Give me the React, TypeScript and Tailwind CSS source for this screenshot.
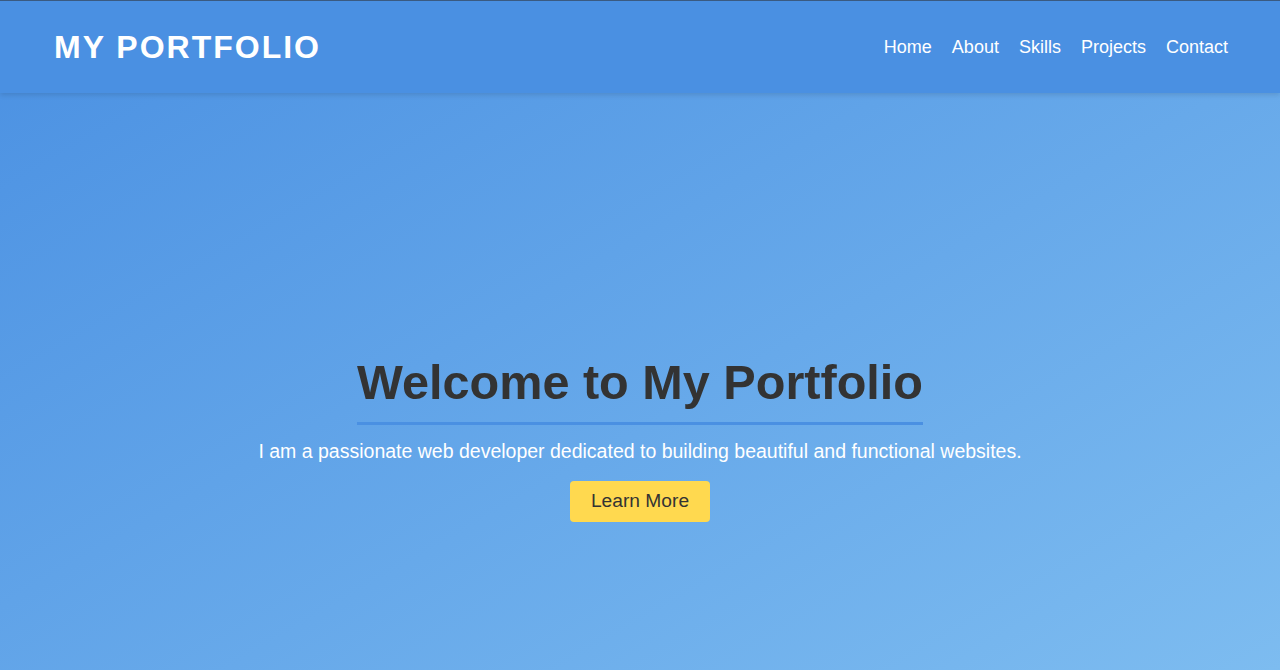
import React from "react";

export default function App() {
  const links: string[] = ["Home", "About", "Skills", "Projects", "Contact"];
  return (
    <div className="h-[670px] w-full flex flex-col overflow-hidden font-['Liberation_Sans',Arial,sans-serif] bg-[linear-gradient(150deg,#4a90e2_0%,#7dbcf0_100%)]">
      <header className="relative z-10 h-[93px] shrink-0 flex items-center justify-between pl-[54px] pr-[52px] bg-[#4a90e2] border-t border-[#3a5a80] shadow-[0_2px_5px_rgba(0,0,0,0.12)]">
        <h1 className="text-[32px] font-bold tracking-[2px] text-white">MY PORTFOLIO</h1>
        <nav className="flex gap-[20px] text-[18px] text-white">
          {links.map((link) => (
            <a key={link} href="#">
              {link}
            </a>
          ))}
        </nav>
      </header>
      <section className="flex-1 flex flex-col items-center justify-center pt-[112px]">
        <h2 className="text-[48.6px] leading-[58px] font-bold text-[#333] border-b-[3px] border-[#4a90e2] pb-[11px]">
          Welcome to My Portfolio
        </h2>
        <p className="mt-[12px] text-[19.5px] leading-[28.8px] text-white">
          I am a passionate web developer dedicated to building beautiful and functional websites.
        </p>
        <button className="mt-[16px] w-[140px] h-[41px] rounded-[4px] bg-[#ffd94f] text-[19.2px] text-[#333]">
          Learn More
        </button>
      </section>
    </div>
  );
}
